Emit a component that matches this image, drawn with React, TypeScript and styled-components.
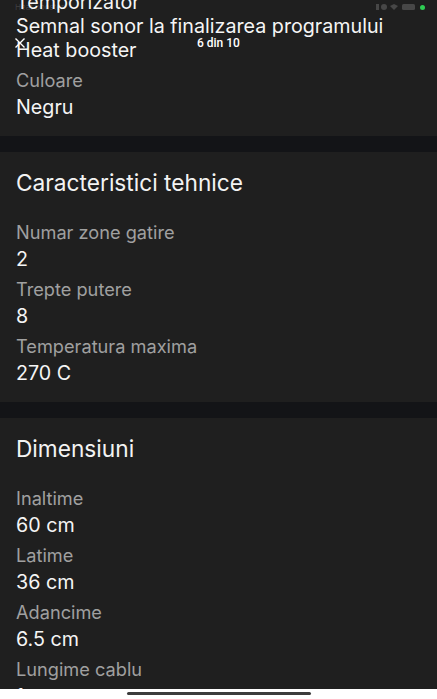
import { FC } from 'react';
import styled, { createGlobalStyle } from 'styled-components';

const GlobalStyle = createGlobalStyle`
  html, body {
    margin: 0;
    padding: 0;
    background: #ffffff;
  }
  body {
    font-family: 'Inter', 'Open Sans', sans-serif;
    -webkit-font-smoothing: antialiased;
  }
`;

const Screen = styled.div`
  position: relative;
  width: 437px;
  height: 699px;
  display: flex;
  flex-direction: column;
  overflow: hidden;
`;

const Viewport = styled.div`
  height: 689px;
  overflow: hidden;
  background: #131417;
`;

// content is scrolled a little, the first line is cut off at the top
const Scroller = styled.div`
  margin-top: -10px;
  display: flex;
  flex-direction: column;
  gap: 16px;
`;

const Card = styled.section<{ $top?: number }>`
  background: #1f1f1f;
  padding: ${({ $top = 16 }) => `${$top}px`} 16px 17px;
  display: flex;
  flex-direction: column;
`;

const CardTitle = styled.h2`
  margin: 0 0 22px;
  font-size: 22.7px;
  line-height: 30px;
  font-weight: 400;
  color: #f3f3f3;
`;

const List = styled.div`
  display: flex;
  flex-direction: column;
  gap: 6px;
`;

const Item = styled.div`
  display: flex;
  flex-direction: column;
`;

const Label = styled.div`
  font-size: 18.2px;
  line-height: 24px;
  color: #a0a0a0;
  margin-bottom: 3px;
`;

const Value = styled.div`
  font-size: 19.7px;
  line-height: 24px;
  color: #f5f5f5;
  white-space: nowrap;
`;

const HomeArea = styled.div`
  flex: 1;
  background: #ffffff;
  display: flex;
  justify-content: center;
  padding-top: 3px;
`;

const HomeBar = styled.div`
  width: 184px;
  height: 3px;
  border-radius: 2px;
  background: #3c3c3c;
`;

const StatusBar = styled.div`
  position: absolute;
  top: 0;
  left: 0;
  right: 0;
  height: 14px;
  display: flex;
  align-items: center;
  justify-content: space-between;
  padding: 0 12px 0 15px;
  box-sizing: border-box;
`;

const StatusText = styled.span`
  font-size: 8px;
  color: rgba(255, 255, 255, 0.16);
`;

const StatusIcons = styled.div`
  display: flex;
  align-items: center;
  gap: 4px;
`;

const GreenDot = styled.span`
  width: 5px;
  height: 5px;
  border-radius: 50%;
  background: #2ecc53;
`;

const Overlay = styled.div`
  position: absolute;
  top: 35px;
  left: 14px;
  right: 0;
  height: 16px;
  display: flex;
  align-items: center;
`;

const CloseButton = styled.button`
  border: none;
  background: none;
  padding: 0;
  width: 12px;
  height: 12px;
  display: flex;
  cursor: pointer;
`;

const Counter = styled.span`
  position: absolute;
  left: 183px;
  font-family: 'Roboto', sans-serif;
  font-size: 12px;
  font-weight: 500;
  color: #ffffff;
`;

interface Spec {
  label: string;
  value: string;
}

const tehnice: Spec[] = [
  { label: 'Numar zone gatire', value: '2' },
  { label: 'Trepte putere', value: '8' },
  { label: 'Temperatura maxima', value: '270 C' },
];

const dimensiuni: Spec[] = [
  { label: 'Inaltime', value: '60 cm' },
  { label: 'Latime', value: '36 cm' },
  { label: 'Adancime', value: '6.5 cm' },
  { label: 'Lungime cablu', value: '1 m' },
];

const SpecList: FC<{ items: Spec[] }> = ({ items }) => (
  <List>
    {items.map((s) => (
      <Item key={s.label}>
        <Label>{s.label}</Label>
        <Value>{s.value}</Value>
      </Item>
    ))}
  </List>
);

export default function App() {
  return (
    <Screen>
      <GlobalStyle />
      <Viewport>
        <Scroller>
          <Card $top={0}>
            <List>
              <Item>
                <Value>Temporizator</Value>
                <Value>Semnal sonor la finalizarea programului</Value>
                <Value>Heat booster</Value>
              </Item>
              <Item>
                <Label>Culoare</Label>
                <Value>Negru</Value>
              </Item>
            </List>
          </Card>
          <Card>
            <CardTitle>Caracteristici tehnice</CardTitle>
            <SpecList items={tehnice} />
          </Card>
          <Card>
            <CardTitle>Dimensiuni</CardTitle>
            <SpecList items={dimensiuni} />
          </Card>
        </Scroller>
      </Viewport>
      <HomeArea>
        <HomeBar />
      </HomeArea>

      <StatusBar>
        <StatusText>Heat booster</StatusText>
        <StatusIcons>
          <svg width="40" height="8" viewBox="0 0 40 8" fill="rgba(255,255,255,0.18)">
            <rect x="0" y="1" width="3" height="6" />
            <circle cx="8" cy="4" r="3" />
            <path d="M14 3 L18 1 L22 3 L18 7 Z" />
            <rect x="26" y="1" width="13" height="6" rx="1.5" />
          </svg>
          <GreenDot />
        </StatusIcons>
      </StatusBar>

      <Overlay>
        <CloseButton aria-label="Inchide">
          <svg width="12" height="12" viewBox="0 0 12 12">
            <path d="M1.5 1.5 L10.5 10.5 M10.5 1.5 L1.5 10.5" stroke="#fff" strokeWidth="1.4" />
          </svg>
        </CloseButton>
        <Counter>6 din 10</Counter>
      </Overlay>
    </Screen>
  );
}
